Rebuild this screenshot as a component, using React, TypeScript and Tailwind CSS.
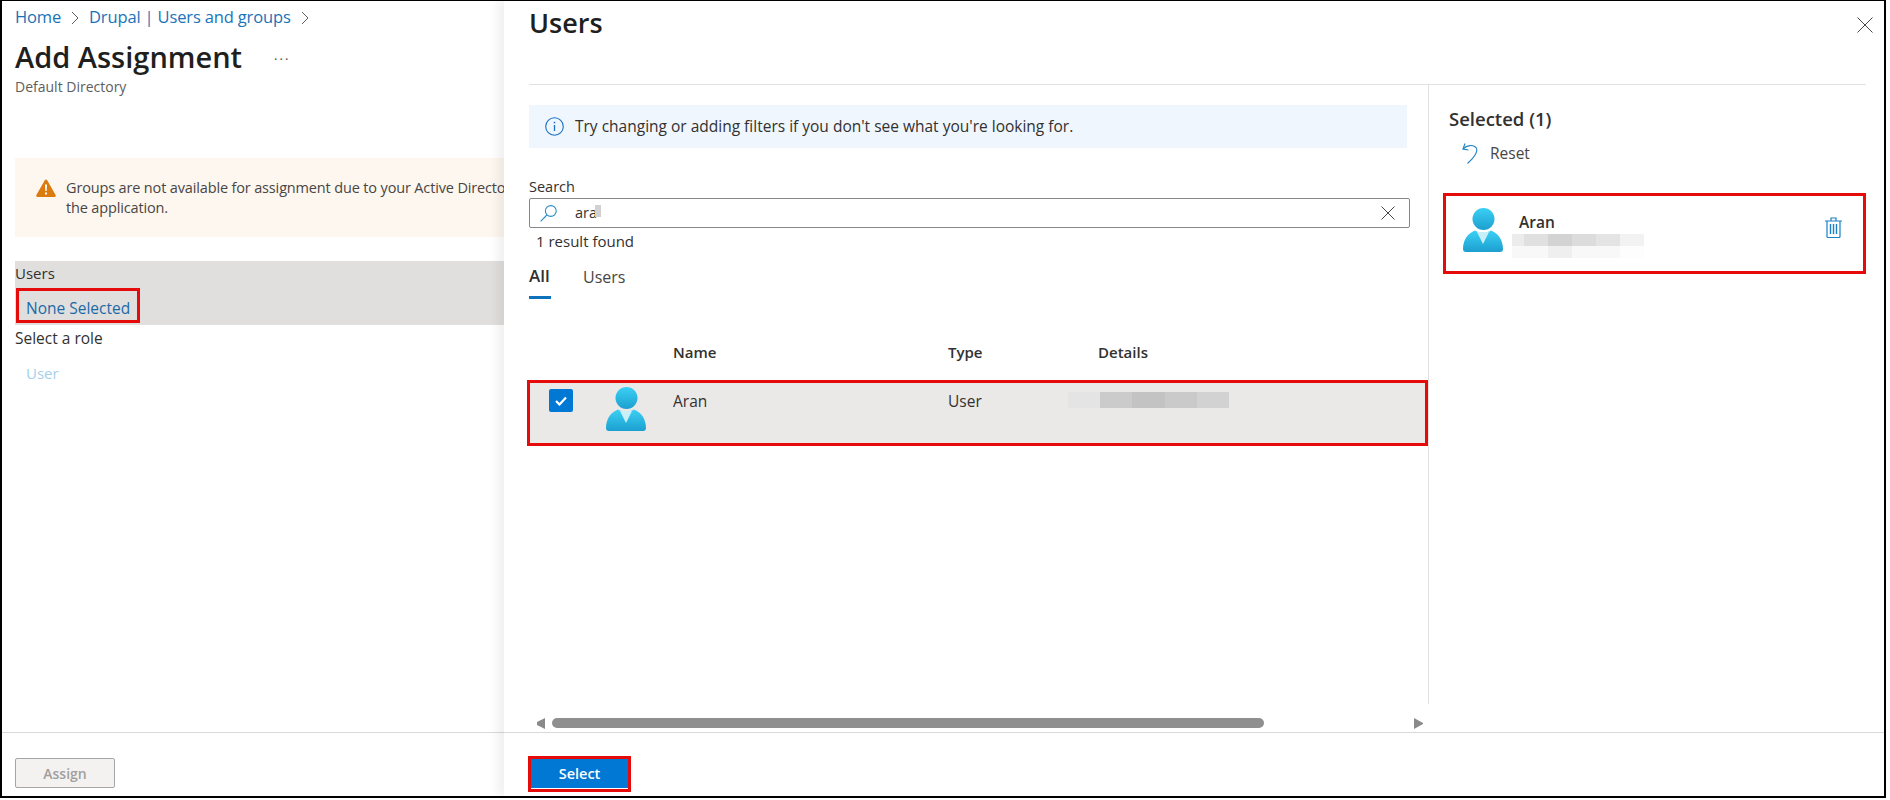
import { useId } from 'react'

function Avatar() {
  const id = useId()
  return (
    <svg width="40" height="44" viewBox="0 0 40 44" className="shrink-0">
      <defs>
        <linearGradient id={id} x1="0" y1="0" x2="0" y2="1">
          <stop offset="0" stopColor="#3bd0f5" />
          <stop offset="1" stopColor="#1c9fcf" />
        </linearGradient>
      </defs>
      <circle cx="20.5" cy="11" r="11" fill={`url(#${id})`} />
      <path d="M12 22.5C5 25 0 32 0 41c0 2 1 3 3 3h34c2 0 3-1 3-3 0-9-5-16-12-18.500-2 1.500-5 2-8 2s-6-.5-8-2z" fill={`url(#${id})`} />
      <path d="M14 24h12l-6 12z" fill="#c9f0f8" />
    </svg>
  )
}

function Chevron() {
  return (
    <svg width="8" height="14" viewBox="0 0 8 14" fill="none" stroke="#605e5c" strokeWidth="1">
      <path d="M1 1l6 6-6 6" />
    </svg>
  )
}

function Pixels({ cells, h }: { cells: { w: number; c: string }[]; h: number }) {
  return (
    <div className="flex">
      {cells.map((cell, i) => (
        <div key={i} style={{ width: cell.w, height: h, backgroundColor: cell.c }} />
      ))}
    </div>
  )
}

export default function App() {
  return (
    <div className="w-[1890px] h-[800px] bg-white font-['Open_Sans',sans-serif] text-[#323130]">
      <div className="w-[1886px] h-[798px] flex border-x-2 border-t border-b-2 border-black overflow-hidden">
        {/* Add Assignment blade */}
        <div className="w-[502px] shrink-0 flex flex-col">
          <div className="flex-1 pl-[13px] overflow-hidden">
            <div className="h-[33px] flex items-center text-[16.500px] text-[#1a73b8] tracking-[-0.15px]">
              <span>Home</span>
              <span className="ml-[10px] mr-[10px]"><Chevron /></span>
              <span>Drupal | Users and groups</span>
              <span className="ml-[10px]"><Chevron /></span>
            </div>
            <div className="mt-[3px] h-[40px] flex items-center">
              <h1 className="text-[29px] font-semibold text-[#201f1e]">Add Assignment</h1>
              <span className="ml-[32px] mt-[4px] text-[13px] leading-none text-[#484644] tracking-[2px]">···</span>
            </div>
            <div className="h-[20px] text-[14px] leading-[20px] text-[#605e5c]">Default Directory</div>

            <div className="mt-[61px] h-[79px] bg-[#fef7f0] flex items-start pl-[21px] pt-[20px] overflow-hidden">
              <svg width="20" height="18" viewBox="0 0 20 18" className="shrink-0 mt-[1px]">
                <path d="M10 0.500c.5 0 .9.300 1.200.8l8.400 14.800c.5.900-.1 1.900-1.100 1.900H1.500c-1 0-1.600-1-1.100-1.900L8.800 1.300c.3-.5.700-.8 1.200-.8z" fill="#db7a0f" />
                <path d="M9 5.500h2l-.3 6.500H9.300z M9 13.500h2v2H9z" fill="#fff" />
              </svg>
              <div className="ml-[10px] text-[14.500px] leading-[20px] whitespace-nowrap tracking-[-0.15px] text-[#484644]">
                <div>Groups are not available for assignment due to your Active Directory</div>
                <div>the application.</div>
              </div>
            </div>

            <div className="mt-[24px] h-[64px] bg-[#e0dfde]">
              <div className="h-[27px] text-[15px] leading-[25px]">Users</div>
              <div className="ml-px w-[124px] h-[35px] border-[3px] border-[#e60b0b] pl-[7px] text-[15.500px] leading-[35px] text-[#1b6aa8] whitespace-nowrap">
                None Selected
              </div>
            </div>
            <div className="h-[26px] text-[15.500px] leading-[26px]">Select a role</div>
            <div className="mt-[10px] ml-[11px] h-[24px] text-[15px] leading-[24px] text-[#a5d0ea]">User</div>
          </div>
          <div className="h-[64px] shrink-0 border-t border-[#d9d9d9] pt-[25px] pl-[13px]">
            <button className="w-[100px] h-[30px] border border-[#a8a6a4] rounded-[2px] bg-[#f3f2f1] text-[14px] font-semibold text-[#a19f9d]">
              Assign
            </button>
          </div>
        </div>

        {/* Users panel */}
        <div className="relative flex-1 flex flex-col bg-white shadow-[-7px_0_9px_rgba(0,0,0,0.06)]">
          <div className="flex-1 flex flex-col overflow-hidden">
            <div className="ml-[25px] mr-[18px] h-[84px] shrink-0 border-b border-[#e1e1e1] flex justify-between items-start">
              <h2 className="h-[44px] text-[27px] leading-[44px] font-semibold text-[#201f1e]">Users</h2>
              <svg width="16" height="16" viewBox="0 0 16 16" fill="none" stroke="#484644" strokeWidth="1" className="mt-[16px] -mr-[7px]">
                <path d="M.5.5l15 15M15.500.5l-15 15" />
              </svg>
            </div>

            <div className="flex-1 flex">
              {/* results */}
              <div className="w-[925px] shrink-0 pl-[25px] border-r border-[#e1e1e1]">
                <div className="mt-[20px] w-[878px] h-[43px] bg-[#f0f6fd] flex items-center pl-[16px]">
                  <svg width="19" height="19" viewBox="0 0 19 19" fill="none" stroke="#1a6fc0" className="shrink-0">
                    <circle cx="9.500" cy="9.500" r="8.800" strokeWidth="1.100" />
                    <path d="M9.500 8v6" strokeWidth="1.300" />
                    <path d="M9.500 4.800v1.500" strokeWidth="1.500" />
                  </svg>
                  <span className="ml-[11px] text-[15.500px]">Try changing or adding filters if you don't see what you're looking for.</span>
                </div>

                <div className="mt-[29px] h-[20px] text-[14.500px] leading-[20px]">Search</div>
                <div className="mt-[1px] w-[881px] h-[30px] border border-[#8a8886] rounded-[2px] flex items-center pl-[10px] pr-[14px]">
                  <svg width="17" height="17" viewBox="0 0 17 17" fill="none" stroke="#2c8cc4" strokeWidth="1.100" className="shrink-0">
                    <circle cx="10.800" cy="6" r="5.400" />
                    <path d="M6.800 10L.7 16.300" />
                  </svg>
                  <span className="ml-[18px] text-[14.500px]">ar</span>
                  <span className="relative text-[14.500px] w-[13px]">
                    a
                    <span className="absolute left-[6px] top-[3px] w-[6px] h-[12px] bg-[#d2d2d2]" />
                  </span>
                  <svg width="14" height="14" viewBox="0 0 14 14" fill="none" stroke="#484644" strokeWidth="1" className="ml-auto">
                    <path d="M.5.5l13 13M13.500.5l-13 13" />
                  </svg>
                </div>
                <div className="ml-[7px] mt-[3px] h-[20px] text-[15px] leading-[20px]">1 result found</div>

                <div className="mt-[13px] flex gap-[32px]">
                  <div className="w-[22px] h-[35px] border-b-[3px] border-[#0f72bd] text-[17px] leading-[24px] font-semibold whitespace-nowrap">All</div>
                  <div className="h-[35px] text-[16px] leading-[26px] text-[#484644]">Users</div>
                </div>

                <div className="mt-[41px] h-[24px] flex pl-[144px] text-[15px] leading-[24px] font-semibold">
                  <div className="w-[275px]">Name</div>
                  <div className="w-[150px]">Type</div>
                  <div>Details</div>
                </div>

                <div className="-ml-[2px] mt-[16px] w-[901px] h-[66px] border-[3px] border-[#e60b0b] bg-[#ebe9e8] flex items-start pl-[19px]">
                  <div className="mt-[6px] w-[24px] h-[23px] rounded-[2px] bg-[#0078d4] flex items-center justify-center shrink-0">
                    <svg width="12" height="10" viewBox="0 0 12 10" fill="none" stroke="#fff" strokeWidth="2.200">
                      <path d="M1 5l3.500 3.500L11 1.500" />
                    </svg>
                  </div>
                  <div className="ml-[33px] mt-[4px]"><Avatar /></div>
                  <div className="ml-[27px] mt-[7px] w-[275px] h-[22px] text-[15.500px] leading-[22px]">Aran</div>
                  <div className="mt-[7px] w-[120px] h-[22px] text-[15.500px] leading-[22px]">User</div>
                  <div className="mt-[9px]">
                    <Pixels
                      h={16}
                      cells={[
                        { w: 32, c: '#e4e4e4' },
                        { w: 32, c: '#cbcbcb' },
                        { w: 33, c: '#c3c3c3' },
                        { w: 32, c: '#cacaca' },
                        { w: 32, c: '#d2d2d2' },
                      ]}
                    />
                  </div>
                </div>
              </div>

              {/* selected */}
              <div className="flex-1 pl-[20px]">
                <div className="mt-[22px] h-[24px] text-[18.500px] leading-[24px] font-semibold">Selected (1)</div>
                <div className="mt-[10px] h-[24px] pl-[13px] flex items-center">
                  <svg width="16" height="21" viewBox="0 0 16 21" fill="none" stroke="#1f82c6" strokeWidth="1.100" className="shrink-0">
                    <path d="M3 .5L1 6l5.500 1" />
                    <path d="M1 6C5 2 11 1.500 14 4.500c2.500 3-1 9.500-8.500 16" />
                  </svg>
                  <span className="ml-[12px] text-[15.500px] mt-[1px] text-[#484644]">Reset</span>
                </div>
                <div className="-ml-[6px] mt-[28px] w-[423px] h-[81px] border-[3px] border-[#e60b0b] flex items-start pl-[17px] pt-[12px] pr-[21px]">
                  <Avatar />
                  <div className="ml-[9px]">
                    <div className="ml-[7px] mt-[3px] h-[22px] text-[15.500px] leading-[22px] font-semibold">Aran</div>
                    <div className="mt-[1px]">
                      <Pixels
                        h={12}
                        cells={[
                          { w: 12, c: '#ececec' },
                          { w: 24, c: '#e0e0e0' },
                          { w: 24, c: '#d3d3d3' },
                          { w: 24, c: '#dcdcdc' },
                          { w: 24, c: '#e4e4e4' },
                          { w: 24, c: '#f2f2f2' },
                        ]}
                      />
                      <Pixels
                        h={12}
                        cells={[
                          { w: 36, c: '#f8f8f8' },
                          { w: 24, c: '#efefef' },
                          { w: 48, c: '#f8f8f8' },
                          { w: 24, c: '#fdfdfd' },
                        ]}
                      />
                    </div>
                  </div>
                  <svg width="17" height="21" viewBox="0 0 17 21" fill="none" stroke="#1b80c4" strokeWidth="1.200" className="ml-auto mt-[9px]">
                    <path d="M0 4h17M6 4V1h5v3" />
                    <path d="M2 4v15.500c0 .5.500 1 1 1h11c.5 0 1-.5 1-1V4" />
                    <path d="M5.500 7v10M8.500 7v10M11.500 7v10" strokeWidth="1.400" />
                  </svg>
                </div>
              </div>
            </div>

            {/* horizontal scrollbar */}
            <div className="h-[28px] shrink-0 pt-[14px] pl-[30px] flex items-start">
              <svg width="11" height="11" viewBox="0 0 11 11" className="shrink-0">
                <path d="M11 0v11L3 7V4z" fill="#8a8a8a" />
              </svg>
              <div className="ml-[7px] w-[712px] h-[10px] rounded-full bg-[#8f8f8f]" />
              <svg width="10" height="11" viewBox="0 0 10 11" className="ml-[150px] shrink-0">
                <path d="M0 0v11l9-5V5z" fill="#8a8a8a" />
              </svg>
            </div>
          </div>

          <div className="h-[64px] shrink-0 border-t border-[#d9d9d9] pt-[23px] pl-[24px]">
            <button className="w-[103px] h-[36px] border-[3px] border-[#e60b0b] bg-white flex flex-col">
              <span className="flex h-[29px] items-center justify-center bg-[#0078d4] text-[14.500px] font-semibold text-white">Select</span>
            </button>
          </div>
        </div>
      </div>
    </div>
  )
}
